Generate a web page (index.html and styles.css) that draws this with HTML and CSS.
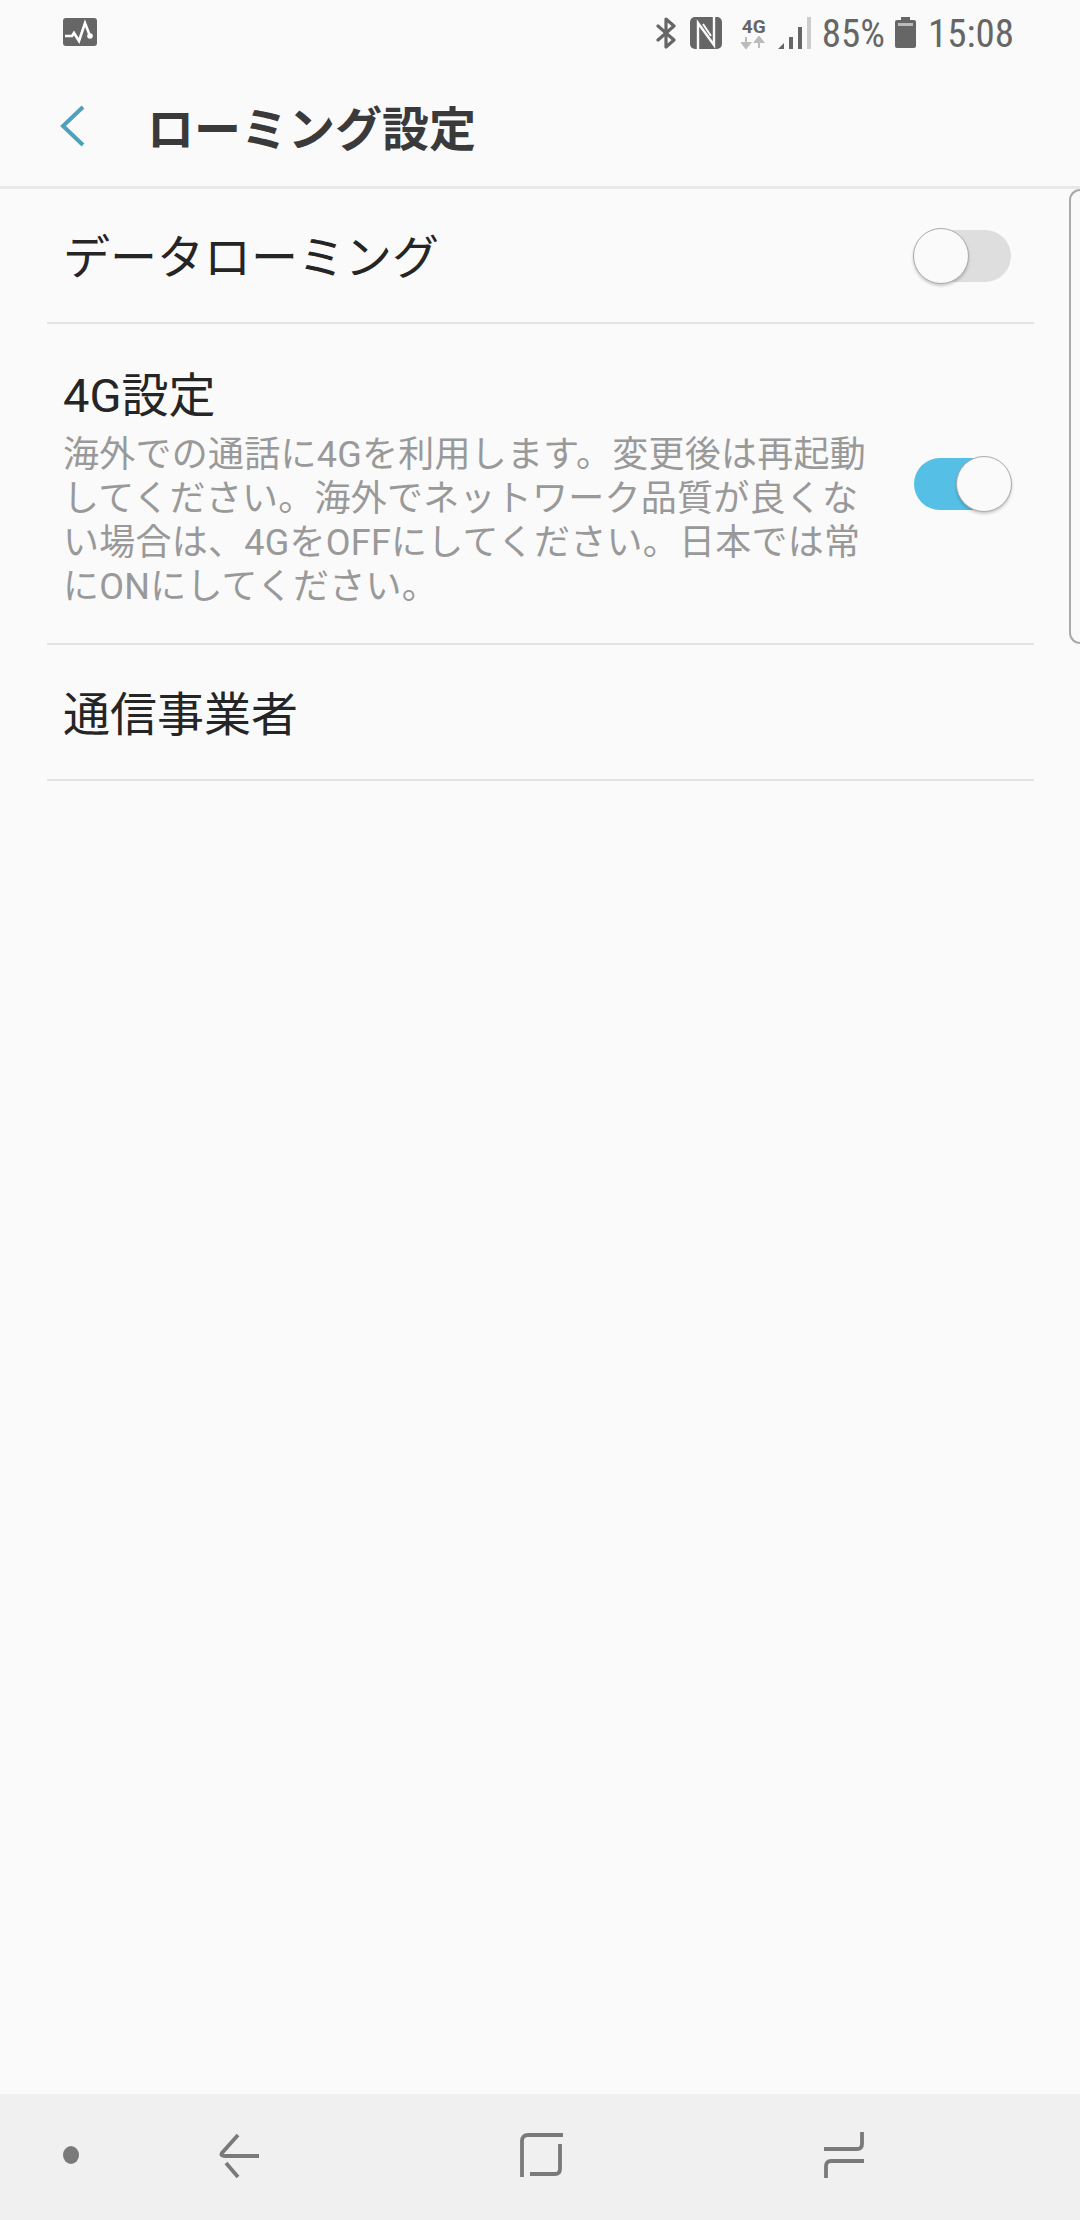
FILE: index.html
```html
<!DOCTYPE html>
<html lang="ja">
<head>
  <meta charset="UTF-8" />
  <title>ローミング設定</title>
  <link rel="stylesheet" href="styles.css">
</head>
<body>
  <div class="status-bar">
    <svg class="pulse-icon" width="34" height="28" viewBox="0 0 34 28">
      <rect width="34" height="28" rx="3" fill="#666"/>
      <path d="M2 18h7l2-3 5 8 6-18 5 13" fill="none" stroke="#fff" stroke-width="2.6"/>
      <circle cx="27" cy="18" r="2.8" fill="#fff"/>
    </svg>
    <div class="status-right">
      <svg class="bt-icon" width="21" height="32" viewBox="0 0 21 32">
        <path d="M2 9l16 14-8 7V2l8 7L2 23" fill="none" stroke="#666" stroke-width="3.2" stroke-linejoin="round" stroke-linecap="round"/>
      </svg>
      <svg class="nfc-icon" width="32" height="32" viewBox="0 0 32 32">
        <rect width="32" height="32" rx="5" fill="#666"/>
        <path d="M8 32V6l16 22V0" fill="none" stroke="#fafafa" stroke-width="2.4"/>
        <path d="M13 7l8 12" fill="none" stroke="#fafafa" stroke-width="2"/>
      </svg>
      <div class="net-icon">
        <span class="net-label">4G</span>
        <svg width="26" height="13" viewBox="0 0 26 13">
          <path d="M5 1v7M1 7l4 5 4-5z" fill="#bbb" stroke="#bbb" stroke-width="2"/>
          <path d="M18 12V5M14 6l4-5 4 5z" fill="#bbb" stroke="#bbb" stroke-width="2"/>
        </svg>
      </div>
      <svg class="signal-icon" width="33" height="32" viewBox="0 0 33 32">
        <path d="M0 32l6-6v6z" fill="#666"/>
        <rect x="11" y="20" width="4" height="12" fill="#666"/>
        <rect x="20" y="10" width="4" height="22" fill="#666"/>
        <rect x="29" y="0" width="4" height="32" fill="#ccc"/>
      </svg>
      <span class="status-text battery-text">85%</span>
      <svg class="battery-icon" width="21" height="31" viewBox="0 0 21 31">
        <path d="M6 0h9v3h4a2 2 0 0 1 2 2v24a2 2 0 0 1-2 2H2a2 2 0 0 1-2-2V5a2 2 0 0 1 2-2h4z" fill="#666"/>
        <rect x="3" y="6" width="15" height="3" fill="#bbb"/>
      </svg>
      <span class="status-text clock">15:08</span>
    </div>
  </div>

  <header class="action-bar">
    <svg class="back-icon" width="26" height="44" viewBox="0 0 26 44">
      <path d="M23 3L3 22l20 19" fill="none" stroke="#4fa0bd" stroke-width="4"/>
    </svg>
    <h1>ローミング設定</h1>
  </header>

  <main class="list">
    <div class="handle"></div>
    <div class="row row-single">
      <div class="row-text"><div class="row-title">データローミング</div></div>
      <div class="switch"><div class="thumb"></div></div>
    </div>
    <div class="row row-double">
      <div class="row-text">
        <div class="row-title">4G設定</div>
        <div class="row-sub">海外での通話に4Gを利用します。変更後は再起動してください。海外でネットワーク品質が良くない場合は、4GをOFFにしてください。日本では常にONにしてください。</div>
      </div>
      <div class="switch on"><div class="thumb"></div></div>
    </div>
    <div class="row row-last">
      <div class="row-text"><div class="row-title">通信事業者</div></div>
    </div>
  </main>

  <nav class="nav-bar">
    <div class="nav-dot"></div>
    <svg class="nav-back" width="42" height="47" viewBox="0 0 42 47">
      <path d="M41 24H7q-5 0-3-3L20 3M8 31l12 14" fill="none" stroke="#7a7a7a" stroke-width="3.8"/>
    </svg>
    <svg class="nav-home" width="43" height="46" viewBox="0 0 43 46">
      <path d="M2 45V9q0-6 6-6H43M40 12V37q0 5-5 5H10" fill="none" stroke="#7a7a7a" stroke-width="3.8"/>
    </svg>
    <svg class="nav-recent" width="42" height="48" viewBox="0 0 42 48">
      <path d="M39 1V13q0 5-5 5H1M41 30H8q-5 0-5 5V47" fill="none" stroke="#7a7a7a" stroke-width="3.8"/>
    </svg>
  </nav>
</body>
</html>
```

FILE: styles.css
```css
* { box-sizing: border-box; }
body {
  font-family: Roboto, 'Noto Sans CJK JP', sans-serif;
  background-color: #fafafa;
  margin: 0;
  padding: 0;
  width: 1080px;
  height: 2220px;
  display: flex;
  flex-direction: column;
  overflow: hidden;
}
.status-bar {
  height: 66px;
  display: flex;
  align-items: flex-start;
  justify-content: space-between;
  padding: 17px 66px 0 63px;
}
.pulse-icon {
  margin-top: 1px;
}
.status-right {
  display: flex;
  align-items: flex-start;
}
.nfc-icon {
  margin-left: 13px;
}
.net-icon {
  margin-left: 19px;
  width: 26px;
  display: flex;
  flex-direction: column;
  align-items: center;
}
.net-label {
  font-size: 19px;
  line-height: 19px;
  font-weight: 700;
  color: #666;
}
.signal-icon {
  margin-left: 11px;
}
.status-text {
  font-size: 39px;
  line-height: 34px;
  color: #666;
  font-stretch: condensed;
  margin-left: 11px;
}
.battery-icon {
  margin-left: 10px;
}
.clock {
  margin-left: 12px;
}
.action-bar {
  height: 123px;
  display: flex;
  align-items: center;
  padding: 0 0 0 60px;
  border-bottom: 3px solid #e8e8e8;
}
.action-bar h1 {
  margin: 0 0 2px 61px;
  font-size: 47px;
  font-weight: 700;
  color: #3a3a3a;
}
.list {
  flex: 1;
  position: relative;
  padding: 0 46px 0 47px;
}
.handle {
  position: absolute;
  top: 0;
  right: 0;
  width: 11px;
  height: 455px;
  border: 2px solid #aaa;
  border-right: none;
  border-radius: 12px 0 0 12px;
}
.row {
  display: flex;
  align-items: center;
  justify-content: space-between;
  padding: 0 23px 0 16px;
  border-bottom: 2px solid #e4e4e4;
}
.row-single {
  height: 135px;
}
.row-last {
  height: 136px;
}
.row-single .row-text,
.row-last .row-text {
  padding-top: 5px;
}
.row-double {
  height: 321px;
}
.row-double .row-text {
  padding-top: 7px;
}
.row-double .row-title {
  margin-bottom: 7px;
}
.row-title {
  font-size: 47px;
  line-height: 60px;
  color: #252525;
}
.row-sub {
  width: 815px;
  font-size: 36px;
  letter-spacing: 0.25px;
  line-height: 44px;
  color: #999;
}
.switch {
  position: relative;
  width: 97px;
  height: 52px;
  border-radius: 26px;
  background-color: #dedede;
}
.switch.on {
  background-color: #56bfe6;
}
.thumb {
  position: absolute;
  left: -1px;
  top: -2px;
  width: 56px;
  height: 56px;
  border-radius: 50%;
  background-color: #fafafa;
  border: 1px solid #aaa;
  box-shadow: 0 2px 3px rgba(0, 0, 0, 0.2);
}
.switch.on .thumb {
  left: 42px;
}
.nav-bar {
  height: 126px;
  background-color: #f0f0f0;
  display: flex;
  align-items: center;
  padding-bottom: 4px;
}
.nav-dot {
  width: 16px;
  height: 18px;
  border-radius: 50%;
  background-color: #7a7a7a;
  margin-left: 63px;
}
.nav-back {
  margin-left: 139px;
}
.nav-home {
  margin-left: 260px;
}
.nav-recent {
  margin-left: 260px;
}
```
